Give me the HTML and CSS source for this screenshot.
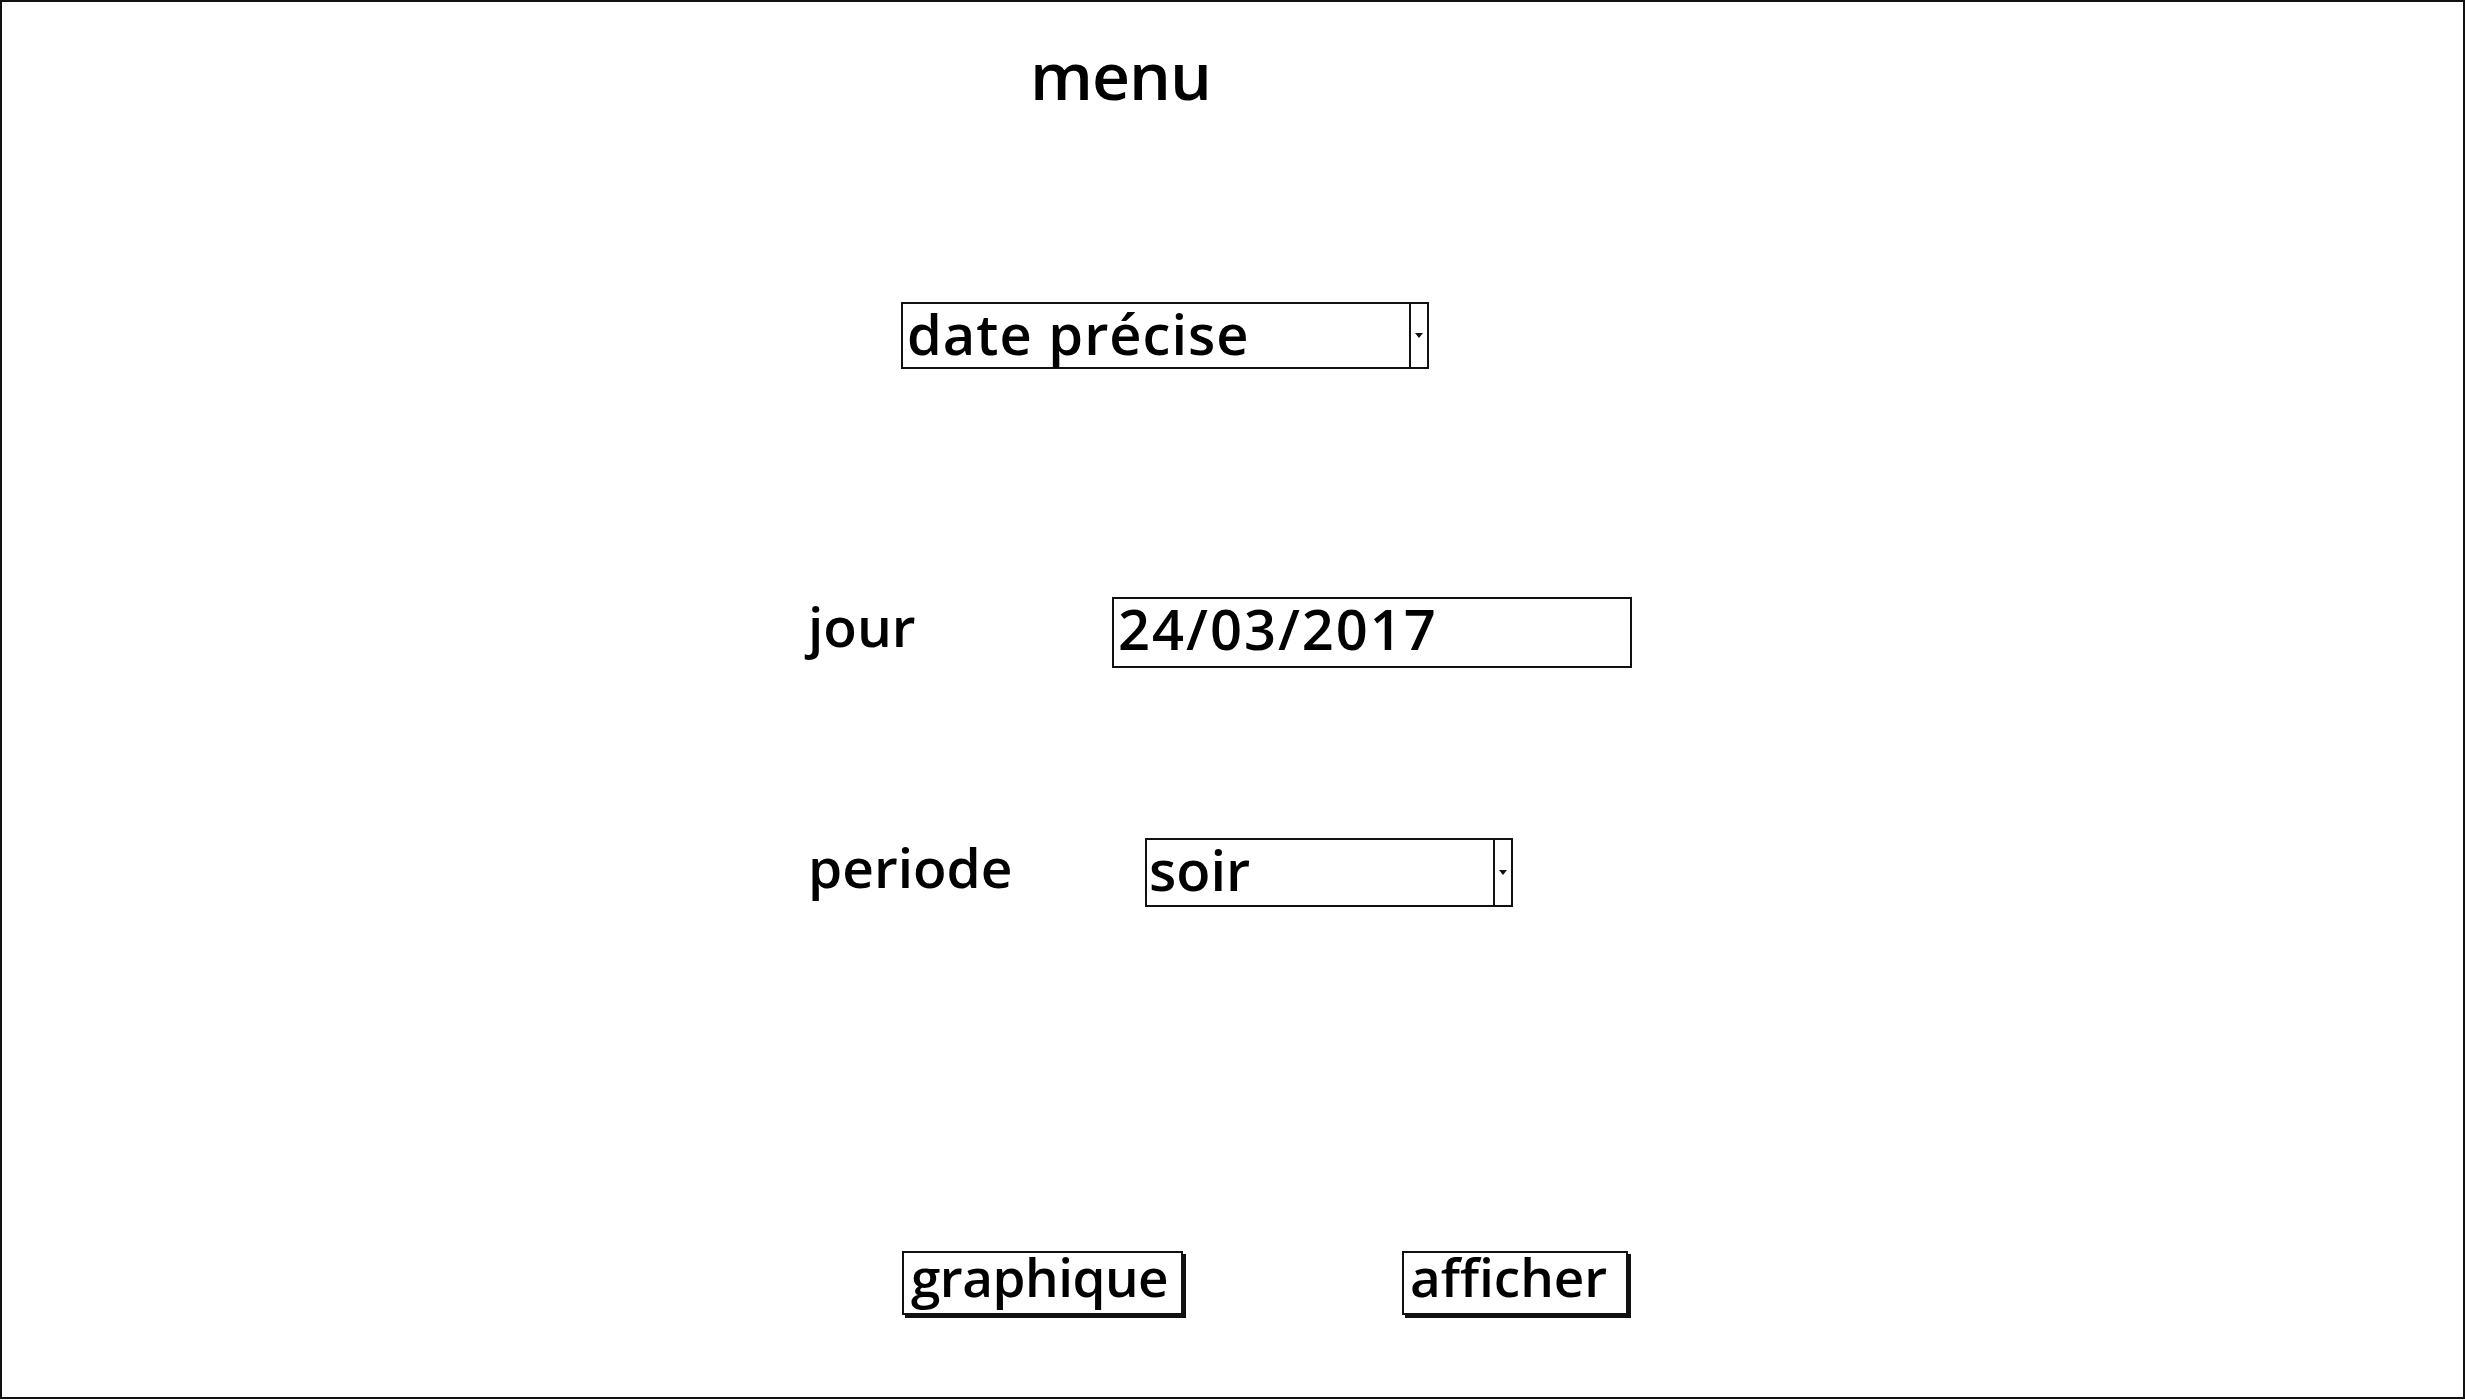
FILE: index.html
```html
<!DOCTYPE html>
<html lang="fr">
<head>
<meta charset="utf-8">
<title>menu</title>
<link rel="stylesheet" href="styles.css">
</head>
<body>
<div class="frame">
  <div class="title">menu</div>

  <div class="select-row">
    <div class="combo combo-mode">
      <span class="combo-text">date précise</span>
      <span class="combo-btn"><svg width="8" height="5" viewBox="0 0 8 5"><polygon points="0,0 8,0 4,5" fill="#111"/></svg></span>
    </div>
  </div>

  <div class="field-row row-jour">
    <div class="label label-jour">jour</div>
    <div class="input">24/03/2017</div>
  </div>

  <div class="field-row row-periode">
    <div class="label label-periode">periode</div>
    <div class="combo combo-periode">
      <span class="combo-text">soir</span>
      <span class="combo-btn"><svg width="8" height="5" viewBox="0 0 8 5"><polygon points="0,0 8,0 4,5" fill="#111"/></svg></span>
    </div>
  </div>

  <div class="button-row">
    <div class="btn btn-graph">graphique</div>
    <div class="btn btn-show">afficher</div>
  </div>
</div>
</body>
</html>
```

FILE: styles.css
```css
* { box-sizing: border-box; }

html, body {
  margin: 0;
  padding: 0;
  background: #fff;
}

body {
  font-family: "Open Sans", "DejaVu Sans", sans-serif;
  font-weight: 600;
  color: #000;
  width: 2465px;
  height: 1400px;
  overflow: hidden;
}

.frame {
  width: 2465px;
  height: 1399px;
  border: 2px solid #111;
  background: #fff;
}

.title {
  margin-top: 39px;
  padding-left: 1028px;
  font-size: 66px;
  line-height: 66px;
  height: 66px;
  letter-spacing: -1px;
}

.select-row {
  margin-top: 195px;
  margin-left: 899px;
  display: flex;
}

.combo {
  display: flex;
  border: 2px solid #111;
  background: #fff;
  font-size: 56px;
  line-height: 56px;
}

.combo-text {
  flex: 1;
  padding-top: 1px;
  white-space: nowrap;
}

.combo-btn {
  width: 18px;
  border-left: 2px solid #111;
  display: flex;
  align-items: center;
  justify-content: center;
}

.combo-btn svg { display: block; }

.combo-mode {
  width: 528px;
  height: 67px;
}

.combo-mode .combo-text {
  padding-left: 4px;
  letter-spacing: 1px;
}

.field-row {
  display: flex;
  align-items: flex-start;
  margin-left: 806px;
}

.row-jour { margin-top: 228px; }
.row-periode { margin-top: 170px; }

.label {
  font-size: 55px;
  line-height: 56px;
  padding-top: 1px;
  white-space: nowrap;
}

.label-jour { width: 304px; }
.label-periode { width: 337px; }

.input {
  width: 520px;
  height: 71px;
  border: 2px solid #111;
  font-size: 56px;
  line-height: 56px;
  padding-top: 1px;
  padding-left: 4px;
  letter-spacing: 2px;
  white-space: nowrap;
}

.combo-periode {
  width: 368px;
  height: 69px;
}

.combo-periode .combo-text { padding-left: 2px; }

.button-row {
  display: flex;
  gap: 219px;
  margin-top: 344px;
  margin-left: 900px;
}

.btn {
  height: 64px;
  border: 2px solid #111;
  box-shadow: 3px 3px 0 #111;
  font-size: 53px;
  line-height: 48px;
  padding-top: 0;
  white-space: nowrap;
  background: #fff;
}

.btn-graph {
  width: 281px;
  padding-left: 7px;
  letter-spacing: -0.5px;
}

.btn-show {
  width: 226px;
  padding-left: 6px;
}
```
